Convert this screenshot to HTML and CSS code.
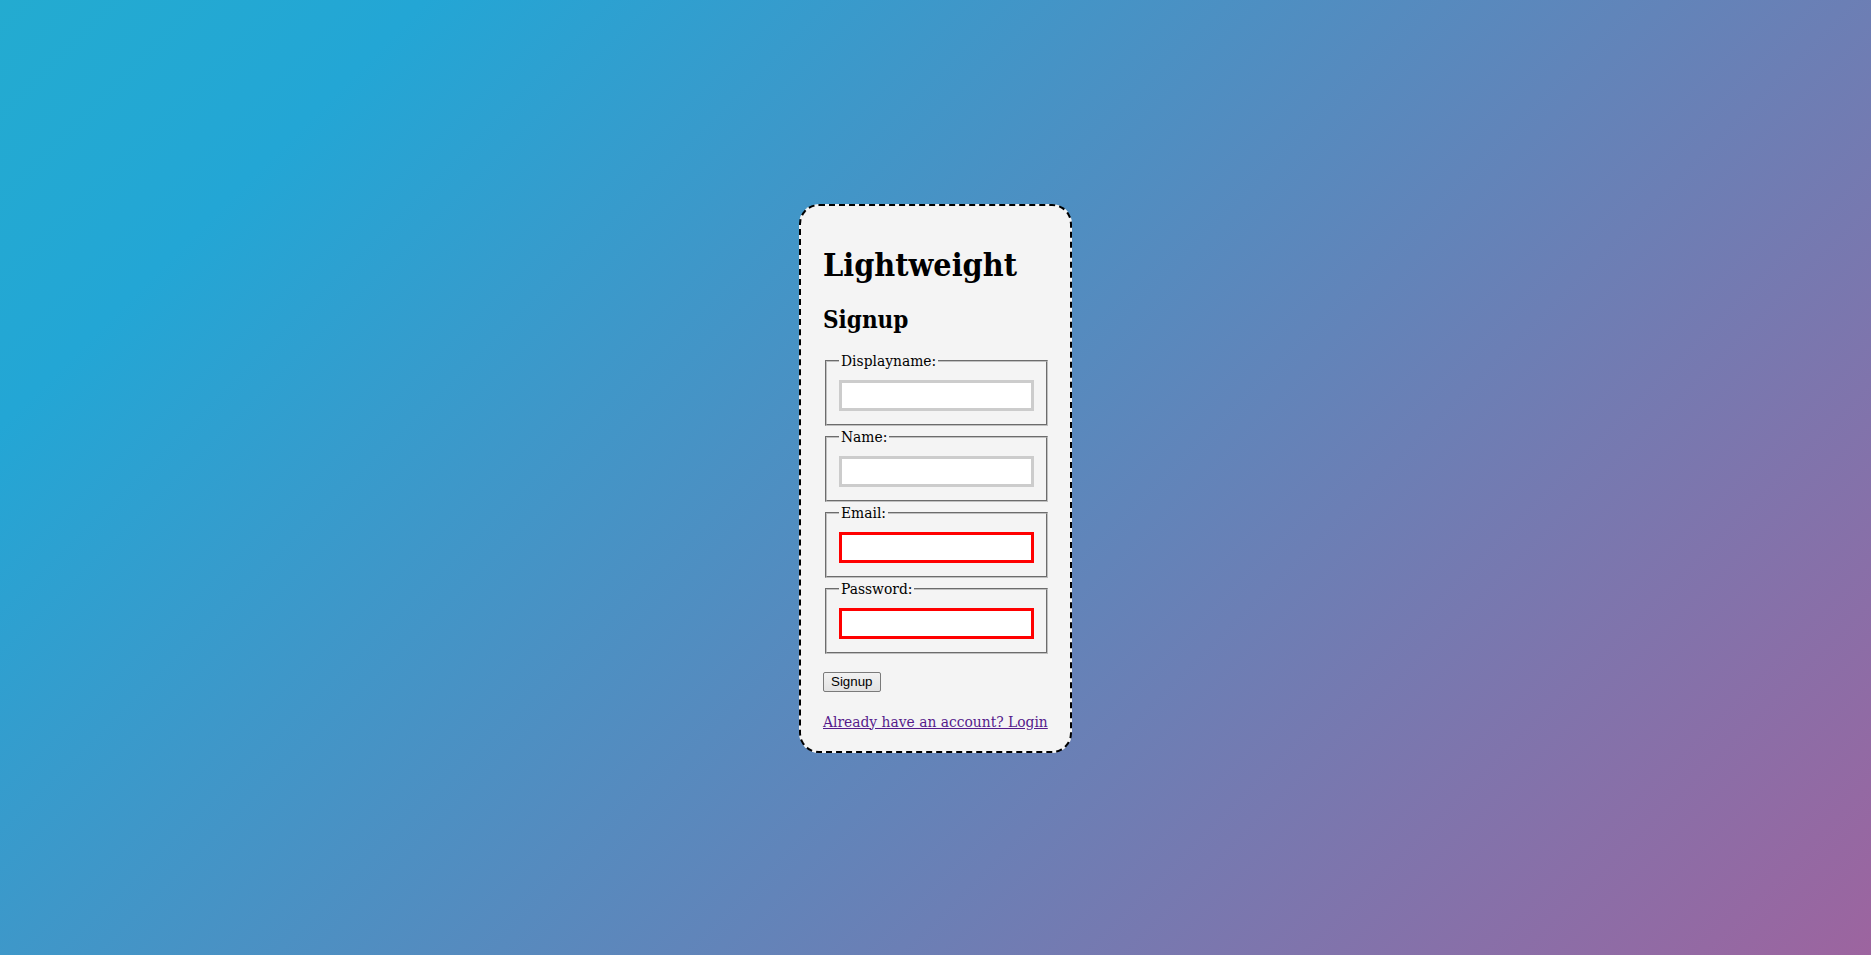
FILE: index.html
```html
<!DOCTYPE html>
<html lang="en">
<head>
<meta charset="utf-8">
<title>Lightweight - Signup</title>
<link rel="stylesheet" href="styles.css">
</head>
<body>
<main class="page">
  <div class="card">
    <h1 class="title">Lightweight</h1>
    <h2 class="subtitle">Signup</h2>
    <form class="form">
      <fieldset class="field">
        <legend class="field-label">Displayname:</legend>
        <input class="field-input" type="text">
      </fieldset>
      <fieldset class="field">
        <legend class="field-label">Name:</legend>
        <input class="field-input" type="text">
      </fieldset>
      <fieldset class="field">
        <legend class="field-label">Email:</legend>
        <input class="field-input field-input--invalid" type="email">
      </fieldset>
      <fieldset class="field">
        <legend class="field-label">Password:</legend>
        <input class="field-input field-input--invalid" type="password">
      </fieldset>
      <div class="actions">
        <button class="btn" type="button">Signup</button>
      </div>
    </form>
    <p class="alt"><a class="alt-link" href="#">Already have an account? Login</a></p>
  </div>
</main>
</body>
</html>
```
FILE: styles.css
```css
html, body {
  margin: 0;
  padding: 0;
}

body {
  font-family: "DejaVu Serif Condensed", "DejaVu Serif", serif;
  color: #000;
}

.page {
  box-sizing: border-box;
  min-height: 100vh;
  padding-top: 2px;
  display: flex;
  align-items: center;
  justify-content: center;
  background: linear-gradient(135deg, #23d5ab -122%, #23a6d5 15%, #e73c7e 152%);
}

.card {
  width: 227px;
  padding: 20px 20px 20px 22px;
  border: 2px dashed #000;
  border-radius: 20px;
  background: #f4f4f4;
}

.title {
  margin: 21px 0 23px;
  font-size: 32px;
  line-height: 36px;
  font-weight: bold;
}

.subtitle {
  margin: 0 0 18px;
  font-size: 24px;
  line-height: 28px;
  font-weight: bold;
}

.form {
  margin: 0;
}

.field {
  margin: 0 2px 1.7px 2px;
  padding: 10px 12px 13px;
  border: 2px groove #c0c0c0;
  min-width: 0;
}

.field-label {
  padding: 0 2px;
  font-size: 15.4px;
  line-height: 18px;
}

.field-input {
  display: block;
  box-sizing: border-box;
  width: 100%;
  height: 31px;
  margin: 0;
  padding: 0 4px;
  border: 3px solid #ccc;
  background: #fff;
  outline: none;
}

.field-input--invalid {
  border-color: #f00;
}

.actions {
  margin-top: 18.8px;
}

.btn {
  display: block;
  box-sizing: border-box;
  height: 20px;
  margin: 0;
  padding: 1px 7px;
  font-family: "Liberation Sans", Arial, sans-serif;
  font-size: 13.33px;
  line-height: 16px;
  color: #000;
  background: linear-gradient(#f2f2f2, #e2e2e2);
  border: 1px solid #7a7a7a;
  border-radius: 2px;
}

.alt {
  margin: 20.2px 0 0;
  font-size: 15.4px;
  line-height: 18px;
}

.alt-link {
  color: #551a8b;
  text-decoration: underline;
}
```
